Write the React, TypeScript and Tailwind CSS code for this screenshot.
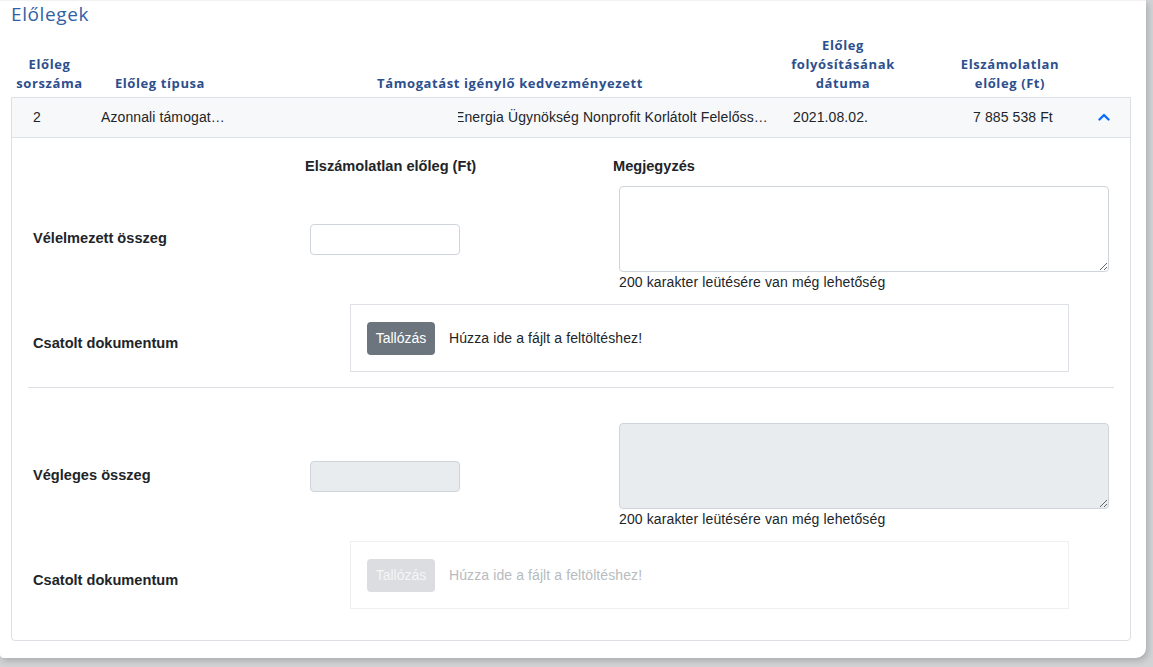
import { useState } from "react";

const headFont = "font-['Open_Sans',Inter,sans-serif]";
const bodyFont = "font-['Liberation_Sans',Arial,sans-serif]";

function ChevronUp() {
  return (
    <svg width="12" height="8" viewBox="0 0 12 8" fill="none">
      <path d="M1.5 6.5 6 2l4.5 4.5" stroke="#0d6efd" strokeWidth="2.4" strokeLinecap="round" strokeLinejoin="round" />
    </svg>
  );
}

function Dropzone({ disabled }: { disabled?: boolean }) {
  return (
    <div
      className={`w-[719px] h-[68px] flex items-center px-[16px] gap-[14px] border ${
        disabled ? "border-[#eeeff0]" : "border-[#dee2e6]"
      }`}
    >
      <button
        disabled={disabled}
        className={`h-[33px] w-[68px] flex items-center justify-center rounded-[4px] text-[14px] ${
          disabled ? "bg-[#dcdde0] text-[#f4f5f6]" : "bg-[#6c757d] text-white"
        }`}
      >
        Tallózás
      </button>
      <span className={`text-[14px] tracking-[0.1px] ${disabled ? "text-[#b8bbbe]" : "text-[#212529]"}`}>
        Húzza ide a fájlt a feltöltéshez!
      </span>
    </div>
  );
}

function AmountBlock({ label, disabled }: { label: string; disabled?: boolean }) {
  return (
    <>
      <div className="flex items-center">
        <div className="w-[277px] font-bold text-[14.6px] text-[#212529]">{label}</div>
        <input
          disabled={disabled}
          className={`w-[150px] h-[31px] rounded-[4px] border border-[#ced4da] ${
            disabled ? "bg-[#e9ecef]" : "bg-white"
          }`}
        />
        <div className="ml-[159px] flex flex-col">
          <textarea
            disabled={disabled}
            className={`block w-[490px] h-[86px] rounded-[4px] border border-[#ced4da] ${
              disabled ? "bg-[#e9ecef]" : "bg-white"
            }`}
          />
          <div className="text-[14px] leading-[20px] tracking-[0.12px] text-[#212529]">
            200 karakter leütésére van még lehetőség
          </div>
        </div>
      </div>
      <div className="flex items-center mt-[12px]">
        <div className="w-[317px] mt-[11px] font-bold text-[14.6px] text-[#212529]">Csatolt dokumentum</div>
        <Dropzone disabled={disabled} />
      </div>
    </>
  );
}

export default function App() {
  const [open, setOpen] = useState(true);

  return (
    <div className={`w-[1153px] h-[667px] bg-[#d2d3d5] ${bodyFont} overflow-hidden`}>
      <div className="w-[1146px] h-[658px] bg-white rounded-br-[10px] rounded-bl-[4px] shadow-[2px_3px_6px_rgba(0,0,0,0.18)] border-t border-[#f2f2f2]">
        <h2 className={`${headFont} pl-[11px] pt-0 text-[19px] leading-[26px] tracking-[0.6px] text-[#3361a6]`}>Előlegek</h2>

        {/* fejléc */}
        <div className={`${headFont} flex items-end ml-[11px] mt-[8px] h-[58px] text-[13px] font-bold leading-[19px] tracking-[0.6px] text-[#2d4f8d]`}>
          <div className="w-[77px] flex flex-col items-center whitespace-nowrap">
            <span>Előleg</span>
            <span>sorszáma</span>
          </div>
          <div className="w-[144px] flex justify-center whitespace-nowrap">Előleg típusa</div>
          <div className="w-[556px] flex justify-center whitespace-nowrap">Támogatást igénylő kedvezményezett</div>
          <div className="w-[110px] flex flex-col items-center whitespace-nowrap">
            <span>Előleg</span>
            <span>folyósításának</span>
            <span>dátuma</span>
          </div>
          <div className="w-[224px] flex flex-col items-center whitespace-nowrap">
            <span>Elszámolatlan</span>
            <span>előleg (Ft)</span>
          </div>
        </div>

        <div className="ml-[11px] mt-[4px] w-[1120px] border border-[#dcdfe3] rounded-b-[4px]">
          <div className="flex items-center h-[40px] bg-[#f7f8fa] text-[14px] tracking-[0.1px] text-[#212529] border-b border-[#dcdfe3]">
            <div className="pl-[21px] w-[89px]">2</div>
            <div className="w-[124px] truncate">Azonnali támogatási előleg</div>
            <div className="w-[233px]" />
            <div className="w-[311px] overflow-hidden">
              <div className="-ml-[3px] w-[314px] truncate">
                Energia Ügynökség Nonprofit Korlátolt Felelősségű Társaság
              </div>
            </div>
            <div className="w-[24px]" />
            <div className="w-[180px]">2021.08.02.</div>
            <div className="w-[124px]">7 885 538 Ft</div>
            <button onClick={() => setOpen(!open)} className="flex items-center justify-center w-[14px] h-[14px] mb-[2px]">
              <ChevronUp />
            </button>
          </div>

          {open && (
            <div className="pt-[20px] pb-[31px]">
              <div className="flex font-bold text-[14.6px] leading-[16px] text-[#212529]">
                <div className="w-[293px]" />
                <div className="w-[308px]">Elszámolatlan előleg (Ft)</div>
                <div>Megjegyzés</div>
              </div>
              <div className="pl-[21px] mt-[12px]">
                <AmountBlock label="Vélelmezett összeg" />
              </div>
              <div className="mx-[16px] mt-[15px] border-t border-[#dcdfe3]" />
              <div className="pl-[21px] mt-[35px]">
                <AmountBlock label="Végleges összeg" disabled />
              </div>
            </div>
          )}
        </div>
      </div>
    </div>
  );
}
